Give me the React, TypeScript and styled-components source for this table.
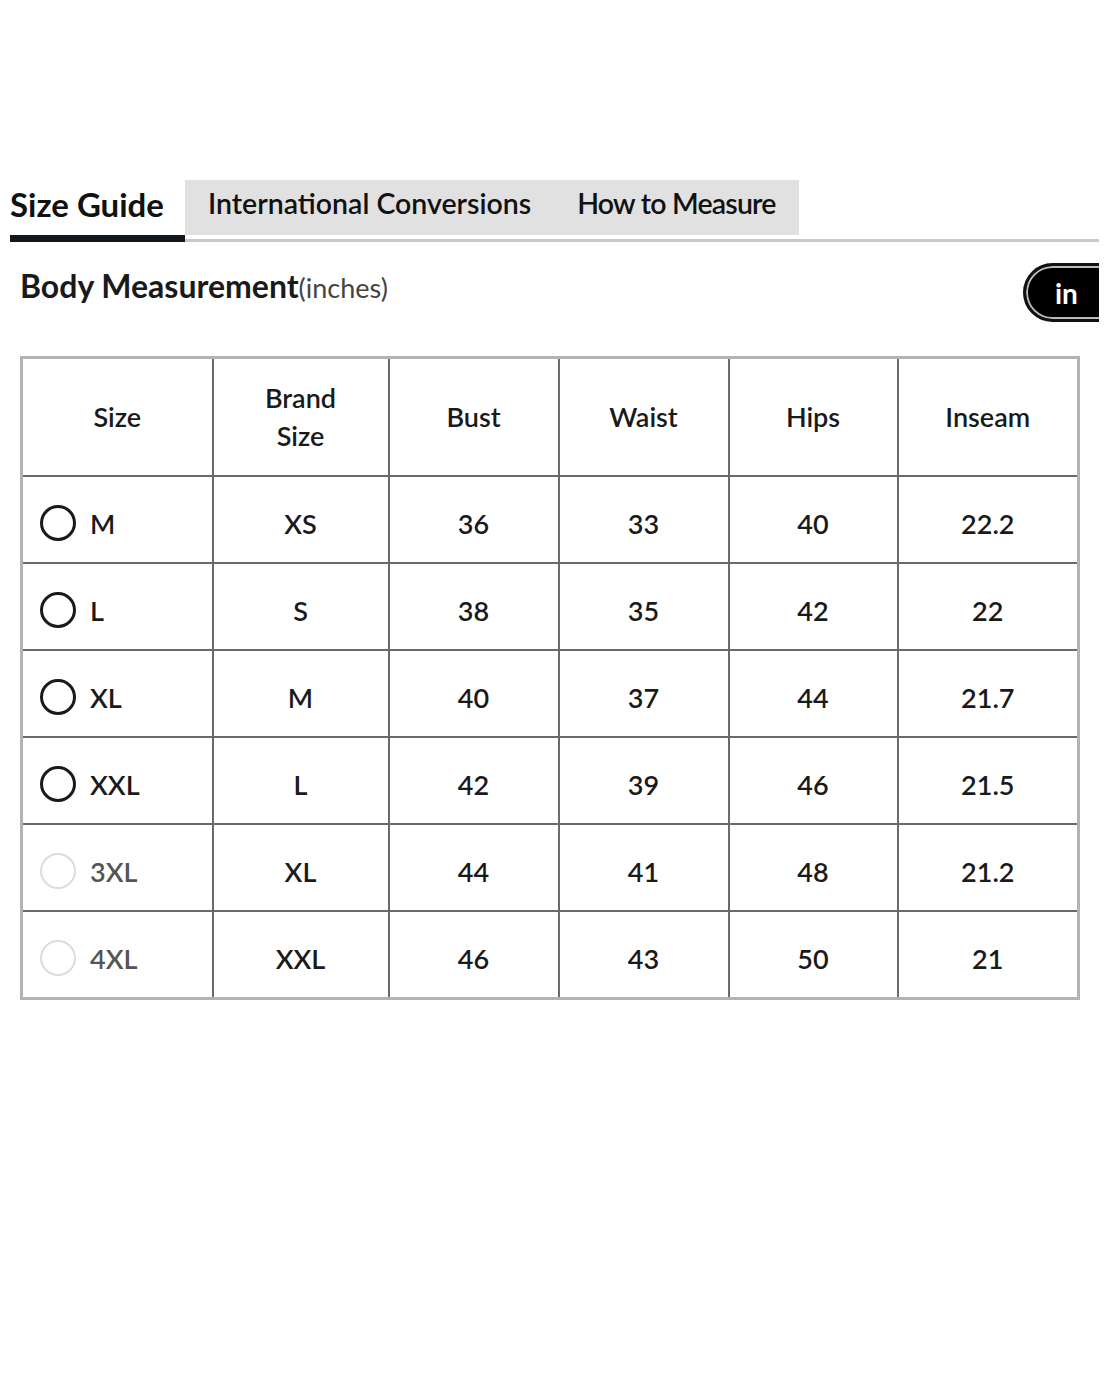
import React from "react";
import styled, { createGlobalStyle } from "styled-components";

const Global = createGlobalStyle`
  html, body { margin: 0; padding: 0; background: #fff; }
  body { font-family: Lato, "Noto Sans", Arial, sans-serif; color: #1a1a1a; }
`;

const Page = styled.div`
  width: 1089px;
  padding: 180px 0 0 10px;
  overflow: hidden;
`;

const TabBar = styled.div`
  display: flex;
  align-items: flex-start;
  border-bottom: 3px solid #c9c9c9;
`;

const ActiveTab = styled.div`
  display: flex;
  align-items: center;
  padding: 0 21px 7px 0;
  box-sizing: border-box;
  border-bottom: 7px solid #111820;
  margin-bottom: -3px;
  height: 62px;
  font-size: 33px;
  font-weight: 700;
  color: #111;
`;

const TabGroup = styled.div`
  display: flex;
  height: 55px;
  background: #e1e1e1;
`;

const Tab = styled.div<{ $tight?: boolean }>`
  display: flex;
  align-items: center;
  padding: 0 23px 9px;
  font-size: 28.5px;
  font-weight: 600;
  letter-spacing: ${(p) => (p.$tight ? "-0.8px" : "0")};
  color: #111;
`;

const HeadRow = styled.div`
  display: flex;
  justify-content: space-between;
  align-items: center;
  margin-top: 21px;
  padding-left: 10px;
`;

const Title = styled.h2`
  margin: 0;
  font-size: 32px;
  font-weight: 700;
  color: #1a1a1a;
  position: relative;
  top: -7px;
`;

const Unit = styled.span`
  font-size: 27px;
  font-weight: 400;
  color: #444;
`;

const Toggle = styled.div`
  width: 120px;
  height: 53px;
  margin-right: -79px;
  border-radius: 30px;
  border: 3px solid #111;
  box-shadow: inset 0 0 0 2px #bbb, inset 0 0 0 3px #000;
  background: #000;
  color: #fff;
  font-size: 28px;
  font-weight: 700;
  display: flex;
  align-items: center;
  padding-left: 29px;
  box-sizing: content-box;
`;

const Table = styled.table`
  margin: 34px 0 0 10px;
  width: 1057px;
  table-layout: fixed;
  border-collapse: collapse;
  border: 3px solid #b3b3b3;
`;

const Th = styled.th`
  border: 2px solid #6a6a6a;
  height: 116px;
  font-size: 27px;
  font-weight: 600;
  line-height: 38px;
  color: #1a1a1a;
  text-align: center;
  padding: 0;
`;

const Td = styled.td<{ $left?: boolean }>`
  border: 2px solid #6a6a6a;
  height: 77px;
  font-size: 27px;
  font-weight: 600;
  color: #1a1a1a;
  text-align: ${(p) => (p.$left ? "left" : "center")};
  padding: 8px 0 0 ${(p) => (p.$left ? "17px" : "0")};
`;

const SizeLabel = styled.label<{ $off?: boolean }>`
  display: flex;
  align-items: center;
  gap: 14px;
  color: ${(p) => (p.$off ? "#555" : "#1a1a1a")};
`;

const Radio = styled.span<{ $off?: boolean }>`
  width: 36px;
  height: 36px;
  box-sizing: border-box;
  border-radius: 50%;
  border: ${(p) => (p.$off ? "2px solid #dcdcdc" : "3px solid #1a1a1a")};
  margin-top: -2px;
`;

const rows = [
  ["M", "XS", "36", "33", "40", "22.2", false],
  ["L", "S", "38", "35", "42", "22", false],
  ["XL", "M", "40", "37", "44", "21.7", false],
  ["XXL", "L", "42", "39", "46", "21.5", false],
  ["3XL", "XL", "44", "41", "48", "21.2", true],
  ["4XL", "XXL", "46", "43", "50", "21", true],
] as const;

export default function App() {
  return (
    <Page>
      <Global />
      <TabBar>
        <ActiveTab>Size Guide</ActiveTab>
        <TabGroup>
          <Tab>International Conversions</Tab>
          <Tab $tight>How to Measure</Tab>
        </TabGroup>
      </TabBar>
      <HeadRow>
        <Title>
          Body Measurement<Unit>(inches)</Unit>
        </Title>
        <Toggle>in</Toggle>
      </HeadRow>
      <Table>
        <colgroup>
          <col style={{ width: 191 }} />
          <col style={{ width: 176 }} />
          <col style={{ width: 170 }} />
          <col style={{ width: 170 }} />
          <col style={{ width: 169 }} />
          <col style={{ width: 181 }} />
        </colgroup>
        <thead>
          <tr>
            <Th>Size</Th>
            <Th>
              Brand
              <br />
              Size
            </Th>
            <Th>Bust</Th>
            <Th>Waist</Th>
            <Th>Hips</Th>
            <Th>Inseam</Th>
          </tr>
        </thead>
        <tbody>
          {rows.map((r) => (
            <tr key={r[0]}>
              <Td $left>
                <SizeLabel $off={r[6]}>
                  <Radio $off={r[6]} />
                  {r[0]}
                </SizeLabel>
              </Td>
              <Td>{r[1]}</Td>
              <Td>{r[2]}</Td>
              <Td>{r[3]}</Td>
              <Td>{r[4]}</Td>
              <Td>{r[5]}</Td>
            </tr>
          ))}
        </tbody>
      </Table>
    </Page>
  );
}
